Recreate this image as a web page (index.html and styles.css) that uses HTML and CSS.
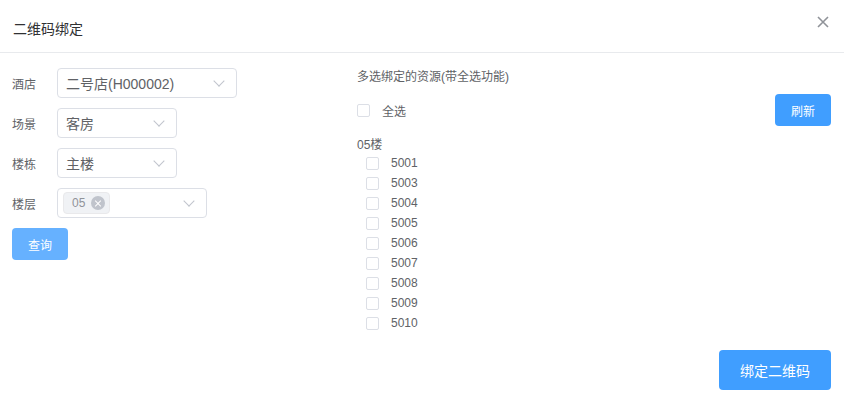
FILE: index.html
```html
<!DOCTYPE html>
<html lang="zh-CN">
<head>
  <meta charset="UTF-8">
  <title>二维码绑定</title>
  <link rel="stylesheet" href="styles.css">
</head>
<body>
  <div class="dialog">
    <div class="dialog-header">
      <span class="dialog-title">二维码绑定</span>
      <button class="dialog-close" type="button" aria-label="关闭">
        <svg width="12" height="12" viewBox="0 0 12 12">
          <path d="M1 1 L11 11 M11 1 L1 11" stroke="#909399" stroke-width="1.6" fill="none"/>
        </svg>
      </button>
    </div>

    <div class="dialog-body">
      <div class="query-form">
        <div class="form-row">
          <label class="form-label">酒店</label>
          <div class="select select--wide">
            <span class="select-value">二号店(H000002)</span>
            <span class="select-arrow"></span>
          </div>
        </div>
        <div class="form-row">
          <label class="form-label">场景</label>
          <div class="select select--mid">
            <span class="select-value">客房</span>
            <span class="select-arrow"></span>
          </div>
        </div>
        <div class="form-row">
          <label class="form-label">楼栋</label>
          <div class="select select--mid">
            <span class="select-value">主楼</span>
            <span class="select-arrow"></span>
          </div>
        </div>
        <div class="form-row">
          <label class="form-label">楼层</label>
          <div class="select select--tags">
            <span class="tag">05<span class="tag-close"></span></span>
            <span class="select-arrow"></span>
          </div>
        </div>
        <button class="btn btn--light btn--query" type="button">查询</button>
      </div>

      <div class="resources">
        <div class="resources-title">多选绑定的资源(带全选功能)</div>
        <div class="resources-bar">
          <label class="check"><span class="check-box"></span>全选</label>
          <button class="btn btn--small" type="button">刷新</button>
        </div>
        <div class="group-name">05楼</div>
        <div class="room-list" id="roomList"></div>
      </div>
    </div>

    <div class="dialog-footer">
      <button class="btn btn--large" type="button">绑定二维码</button>
    </div>
  </div>

  <script>
    const rooms = ['5001', '5003', '5004', '5005', '5006', '5007', '5008', '5009', '5010'];
    const roomList = document.getElementById('roomList');
    roomList.innerHTML = rooms
      .map(r => `<label class="check room"><span class="check-box"></span>${r}</label>`)
      .join('');
  </script>
</body>
</html>
```

FILE: styles.css
```css
* {
  box-sizing: border-box;
}

body {
  margin: 0;
  background: #fff;
  font-family: "Liberation Sans", "Noto Sans CJK SC", sans-serif;
  color: #606266;
}

.dialog {
  width: 844px;
  height: 400px;
  background: #fff;
}

.dialog-header {
  height: 53px;
  display: flex;
  justify-content: space-between;
  align-items: flex-start;
  padding: 0 15px 0 13px;
  border-bottom: 1px solid #e8eaed;
}

.dialog-title {
  margin-top: 20px;
  font-size: 14px;
  line-height: 18px;
  color: #303133;
}

.dialog-close {
  margin-top: 16px;
  padding: 0;
  border: none;
  background: none;
  width: 12px;
  height: 12px;
  cursor: pointer;
}

.dialog-close svg {
  display: block;
}

.dialog-body {
  display: flex;
  padding: 15px 13px 0 12px;
}

.query-form {
  width: 345px;
  flex: none;
}

.form-row {
  display: flex;
  align-items: center;
  height: 30px;
  margin-bottom: 10px;
}

.form-row:last-of-type {
  margin-bottom: 0;
}

.form-label {
  width: 45px;
  font-size: 12px;
  color: #606266;
}

.select {
  height: 30px;
  display: flex;
  align-items: center;
  justify-content: space-between;
  padding: 0 11px 0 8px;
  border: 1px solid #dcdfe6;
  border-radius: 4px;
}

.select--wide { width: 180px; }
.select--mid { width: 120px; }
.select--tags { width: 150px; padding-left: 5px; }

.select-value {
  font-size: 14px;
  color: #606266;
}

.select-arrow {
  width: 8px;
  height: 8px;
  margin-top: -5px;
  margin-right: 2px;
  border-right: 1px solid #c0c4cc;
  border-bottom: 1px solid #c0c4cc;
  transform: rotate(45deg);
}

.tag {
  display: flex;
  align-items: center;
  height: 22px;
  padding: 0 4px 0 8px;
  background: #f0f2f5;
  border: 1px solid #e9e9eb;
  border-radius: 4px;
  font-size: 12px;
  color: #909399;
}

.tag-close {
  position: relative;
  width: 14px;
  height: 14px;
  margin-left: 6px;
  border-radius: 50%;
  background: #c0c4cc;
}

.tag-close::before,
.tag-close::after {
  content: '';
  position: absolute;
  left: 3px;
  top: 6.5px;
  width: 8px;
  height: 1px;
  background: #fff;
  transform: rotate(45deg);
}

.tag-close::after {
  transform: rotate(-45deg);
}

.btn {
  border: none;
  border-radius: 4px;
  background: #409eff;
  color: #fff;
  font-family: inherit;
  cursor: pointer;
}

.btn--light {
  background: #66b1ff;
}

.btn--query {
  display: block;
  width: 56px;
  height: 32px;
  margin-top: 10px;
  font-size: 12px;
}

.btn--small {
  width: 56px;
  height: 32px;
  font-size: 12px;
}

.btn--large {
  width: 112px;
  height: 40px;
  font-size: 14px;
}

.resources {
  flex: 1;
}

.resources-title {
  margin-top: 1px;
  font-size: 12px;
  line-height: 16px;
}

.resources-bar {
  display: flex;
  justify-content: space-between;
  align-items: center;
  margin-top: 9px;
}

.check {
  display: flex;
  align-items: center;
  font-size: 12px;
  color: #606266;
}

.check-box {
  width: 13px;
  height: 13px;
  margin-right: 12px;
  border: 1px solid #dcdfe6;
  border-radius: 2px;
  background: #fff;
}

.group-name {
  margin-top: 11px;
  font-size: 12px;
  line-height: 16px;
}

.room-list {
  height: 184px;
  overflow: hidden;
}

.room {
  height: 20px;
  padding-left: 9px;
}

.dialog-footer {
  display: flex;
  justify-content: flex-end;
  padding: 13px 13px 0;
}
```
